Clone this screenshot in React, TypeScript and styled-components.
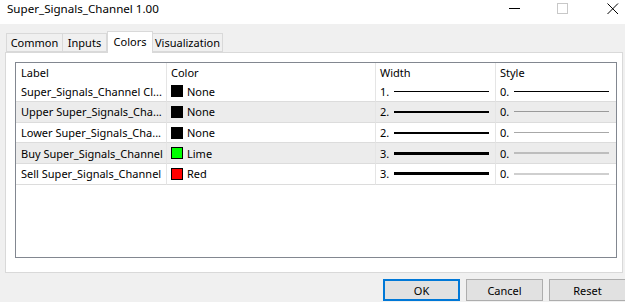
import React from "react";
import styled, { createGlobalStyle } from "styled-components";

const Global = createGlobalStyle`
  html, body { margin: 0; padding: 0; background: #f0f0f0; }
  body { font-family: "Noto Sans", "Open Sans", sans-serif; }
  * { box-sizing: border-box; }
`;

const Window = styled.div`
  width: 625px;
  height: 302px;
  display: flex;
  flex-direction: column;
  background: #f0f0f0;
  overflow: hidden;
  font-size: 11px;
  color: #000;
`;

const TitleBar = styled.div`
  height: 24px;
  background: #fff;
  display: flex;
  align-items: flex-start;
  flex-shrink: 0;
`;

const Title = styled.div`
  padding: 1px 0 0 7px;
  font-size: 11.6px;
  line-height: 16px;
  flex: 1;
  color: #000;
`;

const Controls = styled.div`
  display: flex;
  align-items: flex-start;
  padding-top: 3px;
`;

const ControlBtn = styled.div<{ $w: number }>`
  width: ${(p) => p.$w}px;
  height: 12px;
  display: flex;
  justify-content: flex-start;
`;

const TabStrip = styled.div`
  display: flex;
  align-items: flex-end;
  padding: 7px 0 0 6px;
  height: 28px;
  flex-shrink: 0;
  position: relative;
  z-index: 1;
`;

const Tab = styled.div<{ $active?: boolean; $w: number }>`
  width: ${(p) => p.$w}px;
  height: ${(p) => (p.$active ? 22 : 19)}px;
  margin-bottom: ${(p) => (p.$active ? -1 : 0)}px;
  border: 1px solid #d9d9d9;
  border-bottom: ${(p) => (p.$active ? "none" : "1px solid #d9d9d9")};
  border-left-width: ${(p) => (p.$active ? 1 : 0)}px;
  background: ${(p) => (p.$active ? "#fff" : "#f0f0f0")};
  display: flex;
  align-items: center;
  justify-content: center;
  padding-bottom: ${(p) => (p.$active ? 3 : 0)}px;
  font-size: 11px;
  white-space: nowrap;
  &:first-child { border-left-width: 1px; }
`;

const Panel = styled.div`
  margin: 0 2px 0 5px;
  height: 221px;
  border: 1px solid #d9d9d9;
  background: #fff;
  padding: 9px 5px 14px 9px;
  flex-shrink: 0;
`;

const Table = styled.div`
  height: 196px;
  border: 1px solid #828790;
  background: #fff;
  display: grid;
  grid-template-columns: 150px 209px 120px 1fr;
  grid-template-rows: 18.5px repeat(5, 20.65px) 1fr;
`;

const HeadCell = styled.div<{ $first?: boolean }>`
  border-left: ${(p) => (p.$first ? "none" : "1px solid #e5e5e5")};
  padding-left: ${(p) => (p.$first ? 5 : 4)}px;
  display: flex;
  align-items: center;
  white-space: nowrap;
  overflow: hidden;
`;

const Cell = styled.div<{ $first?: boolean; $alt?: boolean }>`
  border-left: ${(p) => (p.$first ? "none" : "1px solid #e5e5e5")};
  border-bottom: 1px solid #dcdcdc;
  background: ${(p) => (p.$alt ? "#ececec" : "#fff")};
  padding-left: ${(p) => (p.$first ? 5 : 4)}px;
  display: flex;
  align-items: center;
  white-space: nowrap;
  overflow: hidden;
  gap: 4px;
`;

const FillArea = styled.div`
  grid-column: 1 / -1;
`;

const Swatch = styled.span<{ $c: string }>`
  width: 12px;
  height: 12px;
  background: ${(p) => p.$c};
  border: 1px solid #000;
  flex-shrink: 0;
`;

const Num = styled.span`
  width: 10px;
  flex-shrink: 0;
`;

const Line = styled.span<{ $t: number; $c: string; $mr: number }>`
  flex: 1;
  height: ${(p) => p.$t}px;
  background: ${(p) => p.$c};
  margin-right: ${(p) => p.$mr}px;
`;

const Footer = styled.div`
  display: flex;
  justify-content: flex-end;
  gap: 6px;
  padding: 6px 0 0 0;
  margin-right: -1px;
`;

const Button = styled.div<{ $primary?: boolean }>`
  width: 77px;
  height: 22px;
  background: #e1e1e1;
  border: 1px solid ${(p) => (p.$primary ? "#0078d7" : "#adadad")};
  box-shadow: ${(p) => (p.$primary ? "inset 0 0 0 1px #0078d7" : "none")};
  display: flex;
  align-items: center;
  justify-content: center;
  font-size: 11px;
`;

type Row = {
  label: string;
  color: string;
  colorName: string;
  width: number;
  styleColor: string;
  styleT: number;
};

const rows: Row[] = [
  { label: "Super_Signals_Channel Cl...", color: "#000", colorName: "None", width: 1, styleColor: "#000", styleT: 1 },
  { label: "Upper Super_Signals_Cha...", color: "#000", colorName: "None", width: 2, styleColor: "#9a9a9a", styleT: 1 },
  { label: "Lower Super_Signals_Cha...", color: "#000", colorName: "None", width: 2, styleColor: "#a8a8a8", styleT: 1 },
  { label: "Buy Super_Signals_Channel", color: "#00ff00", colorName: "Lime", width: 3, styleColor: "#bdbdbd", styleT: 2 },
  { label: "Sell Super_Signals_Channel", color: "#ff0000", colorName: "Red", width: 3, styleColor: "#cfcfcf", styleT: 2 },
];

export default function App() {
  return (
    <Window>
      <Global />
      <TitleBar>
        <Title>Super_Signals_Channel 1.00</Title>
        <Controls>
          <ControlBtn $w={48}>
            <svg width="12" height="12" viewBox="0 0 12 12">
              <line x1="0" y1="5.5" x2="11" y2="5.5" stroke="#000" strokeWidth="1" />
            </svg>
          </ControlBtn>
          <ControlBtn $w={50}>
            <svg width="12" height="12" viewBox="0 0 12 12">
              <rect x="0.5" y="0.5" width="10" height="10" fill="none" stroke="#c8c8c8" strokeWidth="1" />
            </svg>
          </ControlBtn>
          <ControlBtn $w={18}>
            <svg width="12" height="12" viewBox="0 0 12 12">
              <path d="M0.5 0.5 L11 11 M11 0.5 L0.5 11" stroke="#000" strokeWidth="1" fill="none" />
            </svg>
          </ControlBtn>
        </Controls>
      </TitleBar>
      <TabStrip>
        <Tab $w={57}>Common</Tab>
        <Tab $w={44}>Inputs</Tab>
        <Tab $w={46} $active>Colors</Tab>
        <Tab $w={70}>Visualization</Tab>
      </TabStrip>
      <Panel>
        <Table>
          <HeadCell $first>Label</HeadCell>
          <HeadCell>Color</HeadCell>
          <HeadCell>Width</HeadCell>
          <HeadCell>Style</HeadCell>
          {rows.map((r, i) => {
            const alt = i % 2 === 1;
            return (
              <React.Fragment key={i}>
                <Cell $first $alt={alt}>{r.label}</Cell>
                <Cell $alt={alt}>
                  <Swatch $c={r.color} />
                  <span>{r.colorName}</span>
                </Cell>
                <Cell $alt={alt}>
                  <Num>{r.width}.</Num>
                  <Line $t={r.width} $c="#000" $mr={6} />
                </Cell>
                <Cell $alt={alt}>
                  <Num>0.</Num>
                  <Line $t={r.styleT} $c={r.styleColor} $mr={7} />
                </Cell>
              </React.Fragment>
            );
          })}
          <FillArea />
        </Table>
      </Panel>
      <Footer>
        <Button $primary>OK</Button>
        <Button>Cancel</Button>
        <Button>Reset</Button>
      </Footer>
    </Window>
  );
}
